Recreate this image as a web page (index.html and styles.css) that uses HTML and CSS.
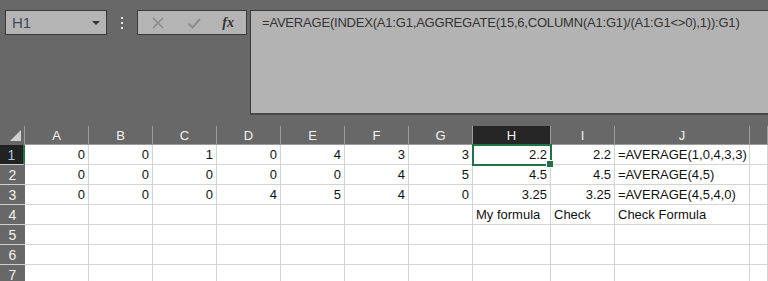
FILE: index.html
```html
<!DOCTYPE html>
<html lang="en">
<head>
  <meta charset="UTF-8" />
  <title>Sheet</title>
  <link rel="stylesheet" href="styles.css">
</head>
<body>
  <div class="barra">
    <div class="nome">
      <span>H1</span>
      <svg class="seta" width="8" height="4" viewBox="0 0 8 4"><path d="M0 0h8L4 4z" fill="#333"/></svg>
    </div>
    <div class="pontos"><i></i><i></i><i></i></div>
    <div class="botoes">
      <svg width="14" height="14" viewBox="0 0 14 14"><path d="M2 2l10 10M12 2L2 12" stroke="#8c8c8c" stroke-width="1.6"/></svg>
      <svg width="14" height="14" viewBox="0 0 14 14"><path d="M1.5 7.5l4 4L13 3" stroke="#8c8c8c" stroke-width="2" fill="none"/></svg>
      <span class="fx">fx</span>
    </div>
    <div class="formula">=AVERAGE(INDEX(A1:G1,AGGREGATE(15,6,COLUMN(A1:G1)/(A1:G1&lt;&gt;0),1)):G1)</div>
  </div>

  <div class="planilha">
    <!-- cabecalho -->
    <div class="canto"><span class="tri"></span></div>
    <div class="col">A</div><div class="col">B</div><div class="col">C</div><div class="col">D</div>
    <div class="col">E</div><div class="col">F</div><div class="col">G</div>
    <div class="col ativa">H</div><div class="col">I</div><div class="col">J</div><div class="col"></div>

    <div class="lin ativa">1</div>
    <div class="cel n">0</div><div class="cel n">0</div><div class="cel n">1</div><div class="cel n">0</div>
    <div class="cel n">4</div><div class="cel n">3</div><div class="cel n">3</div>
    <div class="cel n sel">2.2</div><div class="cel n">2.2</div><div class="cel">=AVERAGE(1,0,4,3,3)</div><div class="cel"></div>

    <div class="lin">2</div>
    <div class="cel n">0</div><div class="cel n">0</div><div class="cel n">0</div><div class="cel n">0</div>
    <div class="cel n">0</div><div class="cel n">4</div><div class="cel n">5</div>
    <div class="cel n">4.5</div><div class="cel n">4.5</div><div class="cel">=AVERAGE(4,5)</div><div class="cel"></div>

    <div class="lin">3</div>
    <div class="cel n">0</div><div class="cel n">0</div><div class="cel n">0</div><div class="cel n">4</div>
    <div class="cel n">5</div><div class="cel n">4</div><div class="cel n">0</div>
    <div class="cel n">3.25</div><div class="cel n">3.25</div><div class="cel">=AVERAGE(4,5,4,0)</div><div class="cel"></div>

    <div class="lin">4</div>
    <div class="cel"></div><div class="cel"></div><div class="cel"></div><div class="cel"></div>
    <div class="cel"></div><div class="cel"></div><div class="cel"></div>
    <div class="cel">My formula</div><div class="cel">Check</div><div class="cel">Check Formula</div><div class="cel"></div>

    <div class="lin">5</div>
    <div class="cel"></div><div class="cel"></div><div class="cel"></div><div class="cel"></div><div class="cel"></div><div class="cel"></div>
    <div class="cel"></div><div class="cel"></div><div class="cel"></div><div class="cel"></div><div class="cel"></div>

    <div class="lin">6</div>
    <div class="cel"></div><div class="cel"></div><div class="cel"></div><div class="cel"></div><div class="cel"></div><div class="cel"></div>
    <div class="cel"></div><div class="cel"></div><div class="cel"></div><div class="cel"></div><div class="cel"></div>

    <div class="lin">7</div>
    <div class="cel"></div><div class="cel"></div><div class="cel"></div><div class="cel"></div><div class="cel"></div><div class="cel"></div>
    <div class="cel"></div><div class="cel"></div><div class="cel"></div><div class="cel"></div><div class="cel"></div>
  </div>
</body>
</html>
```

FILE: styles.css
```css
* {
  margin: 0;
  padding: 0;
  box-sizing: border-box;
}

body {
  width: 768px;
  height: 281px;
  overflow: hidden;
  background: #686868;
  font-family: "Liberation Sans", Arial, sans-serif;
  font-size: 14px;
}

.barra {
  display: flex;
  align-items: flex-start;
  height: 126px;
  padding: 10px 0 0 5px;
}

.nome {
  flex: none;
  width: 102px;
  height: 25px;
  background: #b4b4b4;
  border: 1px solid #3a3a3a;
  display: flex;
  align-items: center;
  justify-content: space-between;
  padding: 0 6px 0 6px;
  color: #3e4a5a;
  font-size: 15px;
}

.seta {
  margin-top: 1px;
}

.pontos {
  flex: none;
  width: 30px;
  height: 25px;
  display: flex;
  flex-direction: column;
  align-items: center;
  justify-content: center;
  gap: 3px;
}

.pontos i {
  width: 2px;
  height: 2px;
  background: #e8e8e8;
}

.botoes {
  flex: none;
  width: 110px;
  height: 25px;
  background: #b4b4b4;
  border: 1px solid #3a3a3a;
  display: flex;
  align-items: center;
  justify-content: space-between;
  padding: 0 12px 0 13px;
}

.fx {
  font-family: "Liberation Serif", serif;
  font-style: italic;
  font-weight: bold;
  font-size: 14px;
  color: #333;
}

.formula {
  flex: 1;
  min-width: 0;
  height: 105px;
  margin-left: 3px;
  background: #b3b3b3;
  border-left: 1px solid #3a3a3a;
  border-top: 1px solid #3a3a3a;
  border-bottom: 2px solid #4a4a4a;
  padding: 4px 0 0 11px;
  color: #333;
  font-size: 13px;
  letter-spacing: -0.2px;
  white-space: nowrap;
  overflow: hidden;
}

.planilha {
  display: grid;
  grid-template-columns: 25px 64px 64px 64px 64px 64px 64px 64px 78px 64px 135px 1fr;
  grid-template-rows: 19px repeat(7, 20px);
}

.canto {
  border-right: 1px solid #9c9c9c;
  position: relative;
}

.tri {
  position: absolute;
  right: 3px;
  bottom: 4px;
  width: 0;
  height: 0;
  border-left: 11px solid transparent;
  border-bottom: 11px solid #d0d0d0;
}

.col {
  color: #f2f2f2;
  text-align: center;
  line-height: 19px;
  border-right: 1px solid #9c9c9c;
  border-bottom: 1px solid #9c9c9c;
  font-size: 13px;
}

.col.ativa {
  background: #262626;
}

.lin {
  color: #f2f2f2;
  text-align: center;
  line-height: 20px;
  font-size: 14px;
  border-bottom: 1px solid #d0d0d0;
}

.lin.ativa {
  background: #222;
  color: #a9c6e8;
  border-right: 2px solid #217346;
}

.cel {
  background: #fff;
  color: #111;
  border-right: 1px solid #d4d4d4;
  border-bottom: 1px solid #d4d4d4;
  line-height: 20px;
  padding: 0 3px;
  white-space: nowrap;
  font-size: 13px;
}

.cel.n {
  text-align: right;
}

.cel.sel {
  position: relative;
  outline: 2px solid #217346;
  outline-offset: -1px;
  z-index: 1;
}

.cel.sel::after {
  content: "";
  position: absolute;
  right: -4px;
  bottom: -4px;
  width: 6px;
  height: 6px;
  background: #217346;
  border: 1px solid #fff;
}
```
